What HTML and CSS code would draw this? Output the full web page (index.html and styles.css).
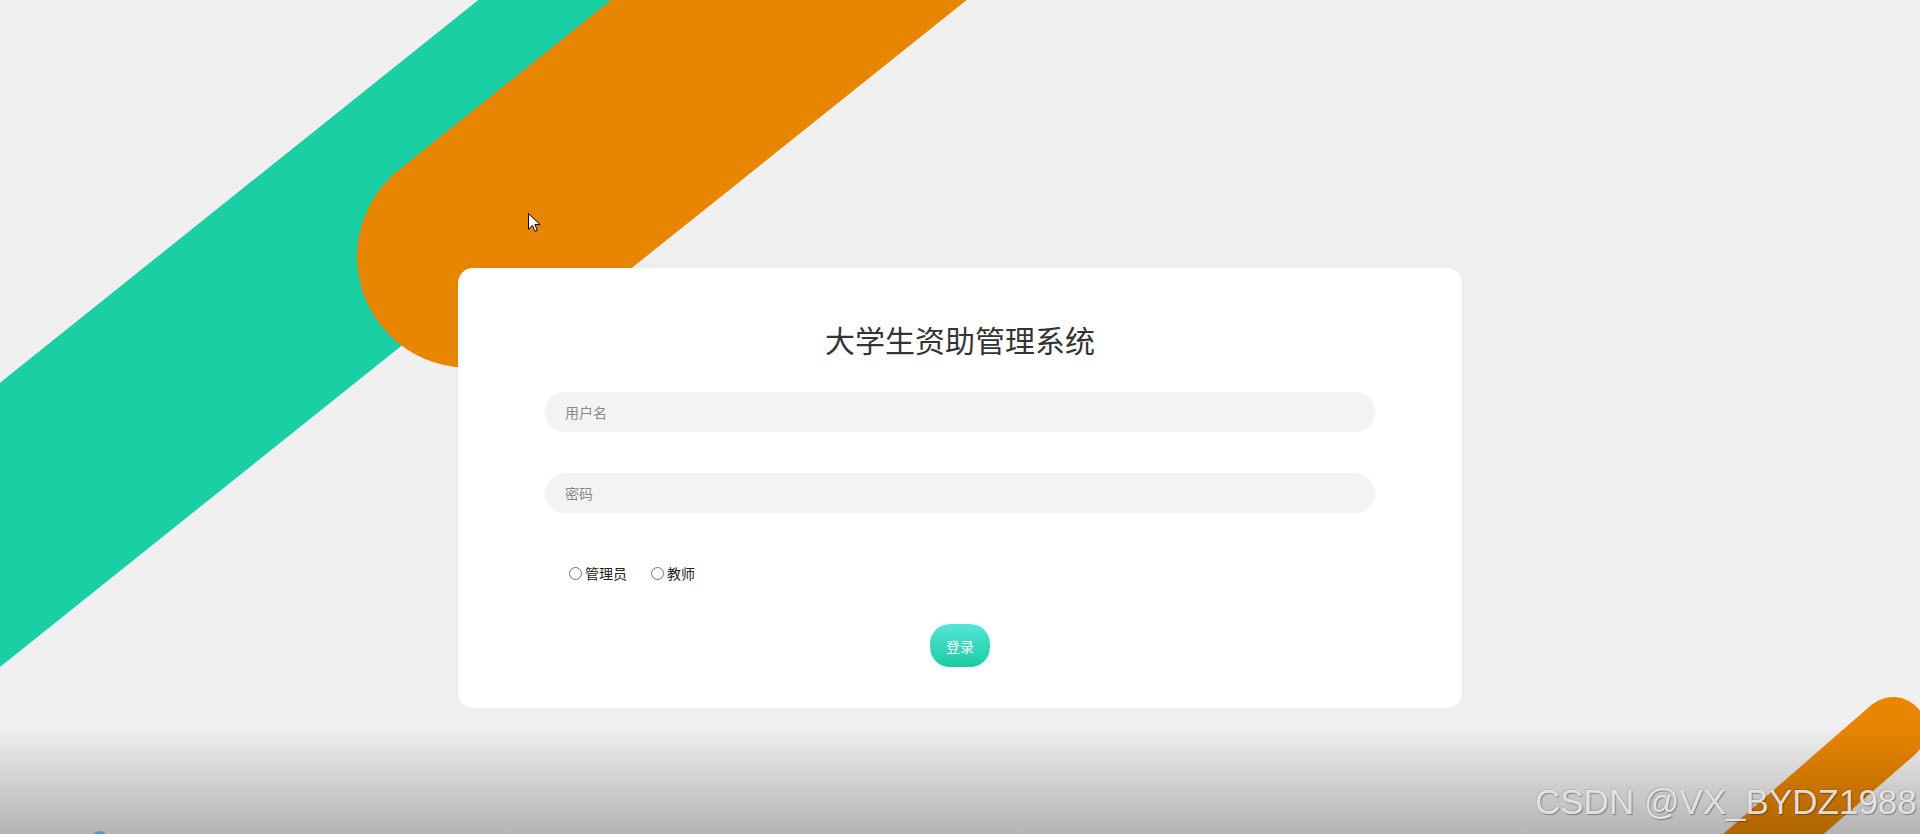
FILE: index.html
```html
<!DOCTYPE html>
<html lang="zh-CN">
<head>
<meta charset="utf-8">
<title>大学生资助管理系统</title>
<link rel="stylesheet" href="styles.css">
</head>
<body>
<div class="page">
  <svg class="backdrop" width="1920" height="834" viewBox="0 0 1920 834" aria-hidden="true">
    <g transform="translate(656 0) rotate(-38.66)">
      <rect class="band-teal" x="-1600" y="-111" width="2600" height="222"/>
    </g>
    <g transform="translate(789 0) rotate(-38.66)">
      <rect class="band-orange" x="-522" y="-111" width="1600" height="222" rx="111" ry="111"/>
    </g>
    <g transform="translate(1893 730) rotate(-41)">
      <rect class="band-orange" x="-500" y="-33" width="533" height="66" rx="33" ry="33"/>
    </g>
  </svg>

  <main class="stage">
    <form class="card">
      <h1 class="title">大学生资助管理系统</h1>
      <input class="field" type="text" placeholder="用户名">
      <input class="field field-pwd" type="password" placeholder="密码">
      <div class="roles">
        <label class="role"><input class="radio" type="radio" name="role">管理员</label>
        <label class="role"><input class="radio" type="radio" name="role">教师</label>
      </div>
      <button class="login" type="button">登录</button>
    </form>
  </main>

  <div class="shade"></div>
  <span class="dot"></span>
  <svg class="cursor" width="13" height="20" viewBox="0 0 13 20" aria-hidden="true">
    <path d="M0.5 0.5 L0.5 16.2 L4.4 12.4 L7 18.4 L9.4 17.4 L6.9 11.6 L12.2 11.6 Z" fill="#fff" stroke="#000" stroke-width="1" stroke-linejoin="round"/>
  </svg>
  <div class="watermark">CSDN @VX_BYDZ1988</div>
</div>
</body>
</html>
```

FILE: styles.css
```css
* {
  box-sizing: border-box;
}

html, body {
  margin: 0;
  padding: 0;
}

body {
  font-family: "Liberation Sans", "Noto Sans CJK SC", sans-serif;
  background: #f0f0f1;
}

.page {
  position: relative;
  width: 1920px;
  height: 834px;
  overflow: hidden;
  background: #f0f0f1;
}

.backdrop {
  position: absolute;
  left: 0;
  top: 0;
}

.band-teal {
  fill: #1bcfa4;
}

.band-orange {
  fill: #e98601;
}

.stage {
  position: relative;
  display: flex;
  justify-content: center;
  padding-top: 268px;
}

.card {
  width: 1004px;
  height: 440px;
  background: #fff;
  border-radius: 15px;
  box-shadow: 0 0 6px rgba(0, 0, 0, 0.04);
  padding: 51px 0 0;
  display: flex;
  flex-direction: column;
  align-items: center;
}

.title {
  margin: 0;
  font-family: "Noto Sans CJK SC", sans-serif;
  font-size: 30px;
  font-weight: 400;
  line-height: 40px;
  color: #333;
  text-align: center;
}

.field {
  display: block;
  width: 830px;
  height: 40px;
  margin: 33px 0 0;
  padding: 0 20px;
  border: none;
  border-radius: 20px;
  background: #f3f3f3;
  font-family: "Noto Sans CJK SC", sans-serif;
  font-size: 14px;
  color: #333;
  outline: none;
}

.field::placeholder {
  color: #8a8a8a;
}

.field-pwd {
  margin-top: 41px;
}

.roles {
  width: 830px;
  height: 20px;
  margin-top: 50px;
  padding-left: 24px;
  display: flex;
  align-items: center;
  gap: 24px;
}

.role {
  display: inline-flex;
  align-items: center;
  gap: 3px;
  font-family: "Noto Sans CJK SC", sans-serif;
  font-size: 14px;
  line-height: 20px;
  color: #222;
}

.radio {
  appearance: none;
  -webkit-appearance: none;
  width: 13px;
  height: 13px;
  margin: 0;
  border: 1px solid #767676;
  border-radius: 50%;
  background: #fff;
}

.login {
  display: block;
  width: 60px;
  height: 43px;
  margin-top: 41px;
  border: none;
  border-radius: 20px;
  background: linear-gradient(to bottom, #52e6d8, #1ccba2);
  color: #fff;
  font-family: "Noto Sans CJK SC", sans-serif;
  font-size: 14px;
  padding: 0;
  box-shadow: 0 1px 3px rgba(0, 0, 0, 0.06);
}

.shade {
  position: absolute;
  left: 0;
  right: 0;
  bottom: 0;
  height: 110px;
  background: linear-gradient(to bottom, rgba(0, 0, 0, 0), rgba(0, 0, 0, 0.25));
}

.dot {
  position: absolute;
  left: 91px;
  top: 831px;
  width: 17px;
  height: 17px;
  border-radius: 50%;
  background: #4a9bd9;
}

.cursor {
  position: absolute;
  left: 528px;
  top: 213px;
}

.watermark {
  position: absolute;
  left: 1535px;
  top: 784px;
  font-family: "Liberation Sans", sans-serif;
  font-size: 35px;
  line-height: 35px;
  color: rgba(236, 236, 236, 0.92);
  text-shadow: 1px 1px 1px rgba(0, 0, 0, 0.35), -1px -1px 1px rgba(0, 0, 0, 0.1);
  white-space: nowrap;
}
```
